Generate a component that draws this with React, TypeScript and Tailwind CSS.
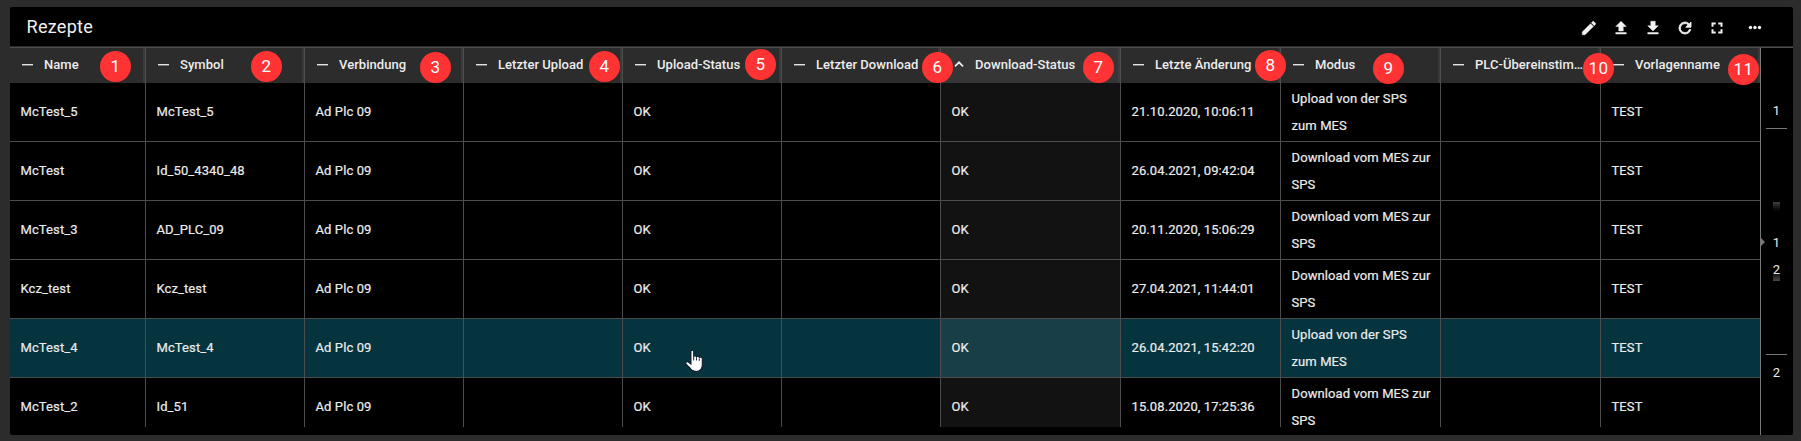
import React from "react";

type Column = {
  key: string;
  label: string;
  badge: { n: number; x: number; y: number };
  sorted?: boolean;
};

const columns: Column[] = [
  { key: "name", label: "Name", badge: { n: 1, x: 90, y: 3 } },
  { key: "symbol", label: "Symbol", badge: { n: 2, x: 105, y: 3 } },
  { key: "conn", label: "Verbindung", badge: { n: 3, x: 115, y: 4 } },
  { key: "lastUp", label: "Letzter Upload", badge: { n: 4, x: 125, y: 3 } },
  { key: "up", label: "Upload-Status", badge: { n: 5, x: 122, y: 1 } },
  { key: "lastDown", label: "Letzter Download", badge: { n: 6, x: 140, y: 4 } },
  { key: "down", label: "Download-Status", badge: { n: 7, x: 142, y: 4 }, sorted: true },
  { key: "changed", label: "Letzte Änderung", badge: { n: 8, x: 134, y: 2 } },
  { key: "mode", label: "Modus", badge: { n: 9, x: 92, y: 5 } },
  { key: "plc", label: "PLC-Übereinstim…", badge: { n: 10, x: 142, y: 5 } },
  { key: "template", label: "Vorlagenname", badge: { n: 11, x: 127, y: 6 } },
];

const UP = "Upload von der SPS zum MES";
const DOWN = "Download vom MES zur SPS";

const rows = [
  ["McTest_5", "McTest_5", "21.10.2020, 10:06:11", UP],
  ["McTest", "Id_50_4340_48", "26.04.2021, 09:42:04", DOWN],
  ["McTest_3", "AD_PLC_09", "20.11.2020, 15:06:29", DOWN],
  ["Kcz_test", "Kcz_test", "27.04.2021, 11:44:01", DOWN],
  ["McTest_4", "McTest_4", "26.04.2021, 15:42:20", UP],
  ["McTest_2", "Id_51", "15.08.2020, 17:25:36", DOWN],
].map(([name, symbol, changed, mode]) => ({
  cells: [name, symbol, "Ad Plc 09", "", "OK", "", "OK", changed, mode, "", "TEST"],
  active: name === "McTest_4",
}));

const GRID =
  "grid grid-cols-[136px_159px_159px_159px_159px_159px_180px_160px_160px_160px_159px]";

const icons = [
  "M3 17.25V21h3.75L17.81 9.94l-3.75-3.75L3 17.25zM20.71 7.04a1 1 0 0 0 0-1.41l-2.34-2.34a1 1 0 0 0-1.41 0l-1.83 1.83 3.75 3.75 1.83-1.83z",
  "M9 16v-6H5l7-7 7 7h-4v6H9zm-4 4v-2h14v2H5z",
  "M5 20h14v-2H5v2zM19 9h-4V3H9v6H5l7 7 7-7z",
  "M17.65 6.35A7.96 7.96 0 0 0 12 4a8 8 0 1 0 7.73 10h-2.08A6 6 0 1 1 12 6c1.66 0 3.14.69 4.22 1.78L13 11h7V4l-2.35 2.35z",
  "M5 5h5v2H7v3H5V5zm9 0h5v5h-2V7h-3V5zm3 9h2v5h-5v-2h3v-3zm-7 3v2H5v-5h2v3h3z",
];

function ToolIcon({ d, heavy }: { d: string; heavy?: boolean }) {
  return (
    <svg viewBox="0 0 24 24" className="size-[18px]" fill="#f2f2f2" stroke="#f2f2f2" strokeWidth={heavy ? 1.1 : 0.6}>
      <path d={d} />
    </svg>
  );
}

function Badge({ n, x, y }: { n: number; x: number; y: number }) {
  return (
    <span
      className="absolute z-10 flex size-[31px] items-center justify-center rounded-full bg-[#ff3333] text-[17px] leading-none font-normal tracking-[0.5px] text-white"
      style={{ left: x, top: y }}
    >
      {n}
    </span>
  );
}

function HeaderCell({ col, last }: { col: Column; last: boolean }) {
  return (
    <div
      className={`relative flex items-center ${last ? "" : "border-r border-[#4d4d4d]"} ${
        col.sorted ? "bg-[#363636]" : "bg-[#2c2c2c]"
      }`}
    >
      {col.sorted ? (
        <svg viewBox="0 0 12 8" className="mb-[3px] ml-[12px] h-2 w-3" fill="none" stroke="#eee" strokeWidth="1.7">
          <path d="M2 6.3 6 2.3l4 4" />
        </svg>
      ) : (
        <span className="mb-px ml-[12px] h-[2px] w-[11px] border-b border-[#777] bg-[#e4e4e4]" />
      )}
      <span className={`pb-px text-[13px] font-medium tracking-[0.04px] whitespace-nowrap text-[#ececec] ${col.sorted ? "ml-[10px]" : "ml-[11px]"}`}>
        {col.label}
      </span>
      <span className={`absolute inset-y-0 right-0 w-[2px] ${col.sorted ? "bg-[#3f3f3f]" : "bg-[#3a3a3a]"}`} />
      <Badge {...col.badge} />
    </div>
  );
}

function HandCursor() {
  return (
    <svg viewBox="0 0 18 24" className="absolute top-[30px] left-[62px] z-10 h-[25px] w-[19px]">
      <path
        d="M5.600 2.200C5.600.8 8.200.8 8.200 2.200V7c.6-.7 2.400-.5 2.700.5.7-.6 2.400-.4 2.700.6.9-.6 2.900-.1 2.900 1.500v5.200c0 4.200-2 6.700-6 6.700-3 0-4.500-1-6-3.400L.9 14.400c-.8-1.700 1-3 2.500-1.700L5.600 14.500V2.200z"
        fill="#fff"
        stroke="#10162a"
        strokeWidth="1"
      />
      <path d="M8.200 7v4M10.900 8v3M13.600 9v2.300" stroke="#10162a" strokeWidth="0.900" />
    </svg>
  );
}

function PageRail() {
  return (
    <aside className="relative flex w-[33px] flex-col items-center border-l border-[#777] pr-px text-[13px] leading-4 text-[#ececec]">
      <span className="mt-[55px]">1</span>
      <span className="mt-[9px] h-px w-[21px] bg-[#777]" />
      <span className="mt-[73px] h-3 w-[7px] bg-linear-to-b from-[#404040] to-black" />
      <span className="mt-[21px]">1</span>
      <span className="mt-[11px]">2</span>
      <span className="-mt-[4px] h-[7px] w-[7px] bg-linear-to-b from-[#222]/60 to-[#484848]" />
      <span className="mt-[73px] h-px w-[21px] bg-[#777]" />
      <span className="mt-[10px]">2</span>
      <svg viewBox="0 0 4 8" className="absolute top-[190px] left-0 h-2 w-1" fill="#777">
        <path d="M0 0 4 4 0 8z" />
      </svg>
    </aside>
  );
}

export default function App() {
  return (
    <div className="h-[441px] w-[1801px] overflow-hidden bg-[#2c2c2c] pt-[7px] pl-[10px] font-['Roboto',sans-serif]">
      <section className="flex h-[428px] w-[1783px] flex-col overflow-hidden rounded-[2px] bg-black">
        <header className="flex h-10 shrink-0 items-center border-b border-[#2a2a2a] pl-[16.5px]">
          <h1 className="text-[18px] leading-5 tracking-[0.3px] text-[#f0f0f0]">Rezepte</h1>
          <div className="mt-[2px] ml-auto flex items-center gap-[14px] pr-[29.5px]">
            {icons.map((d, i) => (
              <ToolIcon key={i} d={d} heavy={i === 3} />
            ))}
            <svg viewBox="0 0 18 18" className="ml-[6px] size-[18px]" fill="#f2f2f2">
              <circle cx="4.500" cy="8.500" r="1.700" />
              <circle cx="9" cy="8.500" r="1.700" />
              <circle cx="13.500" cy="8.500" r="1.700" />
            </svg>
          </div>
        </header>
        <div className="flex min-h-0 flex-1 border-t border-[#4d4d4d]">
          <div className="flex h-[379px] w-[1750px] flex-col overflow-hidden">
            <div className={`${GRID} h-[35px] shrink-0`}>
              {columns.map((c, i) => (
                <HeaderCell key={c.key} col={c} last={i === columns.length - 1} />
              ))}
            </div>
            {rows.map((row, r) => (
              <div key={r} className={`${GRID} h-[59px] shrink-0 ${row.active ? "bg-[#05343f]" : ""}`}>
                {row.cells.map((text, i) => (
                  <div
                    key={i}
                    className={`relative flex items-center border-b border-[#4d4d4d] pl-[10.5px] text-[13px] leading-[27px] tracking-[0.1px] text-[#ececec] [-webkit-text-stroke:0.2px_#ececec] ${
                      i < 10 ? "border-r" : ""
                    } ${i === 8 ? "" : "pb-[2px]"} ${i === 6 ? (row.active ? "bg-[#183f48]" : "bg-[#121212]") : ""}`}
                  >
                    <span className="w-[142px]">{text}</span>
                    {row.active && i === 4 && <HandCursor />}
                  </div>
                ))}
              </div>
            ))}
          </div>
          <PageRail />
        </div>
      </section>
    </div>
  );
}
